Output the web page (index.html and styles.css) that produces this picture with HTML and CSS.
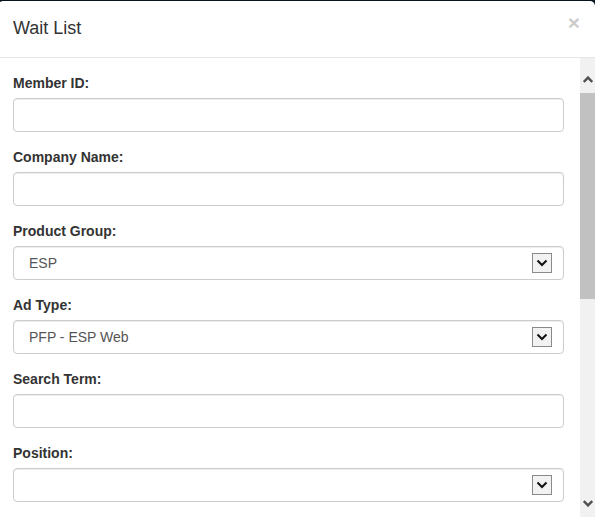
FILE: index.html
```html
<!DOCTYPE html>
<html lang="en">
<head>
<meta charset="utf-8">
<title>Wait List</title>
<link rel="stylesheet" href="styles.css">
</head>
<body>
<div class="modal">
  <div class="modal-header">
    <h4 class="modal-title">Wait List</h4>
    <button type="button" class="close" aria-label="Close">×</button>
  </div>
  <div class="modal-body">
    <form class="form">
      <div class="form-group">
        <label class="label">Member ID:</label>
        <input class="control" type="text">
      </div>
      <div class="form-group">
        <label class="label">Company Name:</label>
        <input class="control" type="text">
      </div>
      <div class="form-group">
        <label class="label">Product Group:</label>
        <div class="select-wrap">
          <select class="control select"><option>ESP</option></select>
          <span class="select-arrow"><svg width="12" height="8" viewBox="0 0 12 8"><path d="M1.5 1.5 L6 6 L10.5 1.5" fill="none" stroke="#111" stroke-width="2"/></svg></span>
        </div>
      </div>
      <div class="form-group">
        <label class="label">Ad Type:</label>
        <div class="select-wrap">
          <select class="control select"><option>PFP - ESP Web</option></select>
          <span class="select-arrow"><svg width="12" height="8" viewBox="0 0 12 8"><path d="M1.5 1.5 L6 6 L10.5 1.5" fill="none" stroke="#111" stroke-width="2"/></svg></span>
        </div>
      </div>
      <div class="form-group">
        <label class="label">Search Term:</label>
        <input class="control" type="text">
      </div>
      <div class="form-group">
        <label class="label">Position:</label>
        <div class="select-wrap">
          <select class="control select"><option></option></select>
          <span class="select-arrow"><svg width="12" height="8" viewBox="0 0 12 8"><path d="M1.5 1.5 L6 6 L10.5 1.5" fill="none" stroke="#111" stroke-width="2"/></svg></span>
        </div>
      </div>
    </form>
    <div class="scrollbar">
      <div class="sb-up"><svg width="10" height="7" viewBox="0 0 10 7"><path d="M0.8 6 L5 1.6 L9.2 6" fill="none" stroke="#505050" stroke-width="2.4"/></svg></div>
      <div class="sb-thumb"></div>
      <div class="sb-track"></div>
      <div class="sb-down"><svg width="10" height="7" viewBox="0 0 10 7"><path d="M0.8 1 L5 5.4 L9.2 1" fill="none" stroke="#505050" stroke-width="2.4"/></svg></div>
    </div>
  </div>
</div>
</body>
</html>
```
FILE: styles.css
```css
html, body {
  margin: 0;
  padding: 0;
  overflow: hidden;
  height: 517px;
}
body {
  background: #0b1828;
  font-family: "Liberation Sans", Arial, sans-serif;
  font-size: 14px;
  line-height: 1.42857143;
  color: #333;
}
.modal {
  box-sizing: border-box;
  width: 599px;
  height: 517px;
  margin-left: -3px;
  background: #fff;
  background-clip: padding-box;
  border: 1px solid rgba(0, 0, 0, 0.2);
  border-bottom: 0;
  border-radius: 6px 6px 0 0;
  display: flex;
  flex-direction: column;
  overflow: hidden;
}
.modal-header {
  display: flex;
  justify-content: space-between;
  align-items: flex-start;
  padding: 15px;
  border-bottom: 1px solid #e5e5e5;
  flex: none;
}
.modal-title {
  margin: 0;
  font-size: 18px;
  font-weight: normal;
  line-height: 1.42857143;
  color: #333;
}
.close {
  margin: -4px 0 0 0;
  padding: 0;
  border: 0;
  background: transparent;
  font-family: "Liberation Sans", Arial, sans-serif;
  font-size: 21px;
  font-weight: bold;
  line-height: 1;
  color: #000;
  opacity: 0.2;
  text-shadow: 0 1px 0 #fff;
  cursor: pointer;
}
.modal-body {
  flex: 1;
  display: flex;
  min-height: 0;
}
.form {
  flex: 1;
  padding: 15px 16px 15px 15px;
  margin: 0;
  overflow: hidden;
}
.form-group {
  margin-bottom: 15px;
}
.label {
  display: inline-block;
  max-width: 100%;
  margin-bottom: 5px;
  font-weight: bold;
}
.control {
  display: block;
  box-sizing: border-box;
  width: 100%;
  height: 34px;
  margin: 0;
  padding: 6px 12px;
  font-family: "Liberation Sans", Arial, sans-serif;
  font-size: 14px;
  line-height: 1.42857143;
  color: #555;
  background: #fff;
  border: 1px solid #ccc;
  border-radius: 4px;
  box-shadow: inset 0 1px 1px rgba(0, 0, 0, 0.075);
  outline: none;
}
.select-wrap {
  position: relative;
}
.select {
  -webkit-appearance: none;
  appearance: none;
  padding-left: 15px;
}
.select-arrow {
  position: absolute;
  top: 7px;
  right: 12px;
  box-sizing: border-box;
  width: 20px;
  height: 20px;
  border: 1px solid #8a8a8a;
  background: #f2f2f2;
  display: flex;
  align-items: center;
  justify-content: center;
  pointer-events: none;
}
.scrollbar {
  flex: none;
  width: 15px;
  background: #f1f1f1;
  display: flex;
  flex-direction: column;
  align-items: stretch;
}
.sb-up {
  height: 35px;
  display: flex;
  justify-content: center;
  align-items: flex-start;
  box-sizing: border-box;
}
.sb-up svg {
  margin-top: 18px;
}
.sb-thumb {
  height: 206px;
  background: #c1c1c1;
}
.sb-track {
  flex: 1;
}
.sb-down {
  display: flex;
  justify-content: center;
  padding-bottom: 10px;
}
```
